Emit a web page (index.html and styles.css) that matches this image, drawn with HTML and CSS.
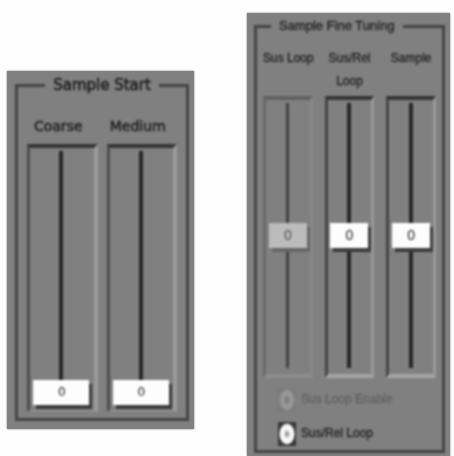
FILE: index.html
```html
<!DOCTYPE html>
<html lang="en">
<head>
<meta charset="utf-8">
<title>Sample Start</title>
<link rel="stylesheet" href="styles.css">
</head>
<body>
<main class="page">
  <section class="panel start">
    <fieldset class="frame">
      <legend>Sample Start</legend>
      <div class="sliders">
        <div class="slot">
          <label for="coarse">Coarse</label>
          <div class="well"><input id="coarse" type="range" min="0" max="100" value="0"><output class="value" for="coarse">0</output></div>
        </div>
        <div class="slot">
          <label for="medium">Medium</label>
          <div class="well"><input id="medium" type="range" min="0" max="100" value="0"><output class="value" for="medium">0</output></div>
        </div>
      </div>
    </fieldset>
  </section>
  <section class="panel fine">
    <fieldset class="frame">
      <legend>Sample Fine Tuning</legend>
      <div class="sliders">
        <div class="slot off">
          <label for="sus">Sus Loop</label>
          <div class="well"><input id="sus" type="range" min="-50" max="50" value="0" disabled><output class="value" for="sus">0</output></div>
        </div>
        <div class="slot">
          <label for="rel">Sus/Rel<br>Loop</label>
          <div class="well"><input id="rel" type="range" min="-50" max="50" value="0"><output class="value" for="rel">0</output></div>
        </div>
        <div class="slot">
          <label for="sample">Sample</label>
          <div class="well"><input id="sample" type="range" min="-50" max="50" value="0"><output class="value" for="sample">0</output></div>
        </div>
      </div>
      <div class="options">
        <label class="option off"><input type="checkbox" disabled><span>Sus Loop Enable</span></label>
        <label class="option"><input type="checkbox" checked><span>Sus/Rel Loop</span></label>
      </div>
    </fieldset>
  </section>
</main>
</body>
</html>
```
FILE: styles.css
```css
* { box-sizing: border-box; }

body {
  margin: 0;
  background: #fefefe;
  color: #202020;
  font-family: "DejaVu Sans", sans-serif;
}

.page {
  display: grid;
  grid-template-columns: minmax(0, 187fr) minmax(0, 203fr);
  gap: 53px;
  align-items: start;
  padding: 13px 4px 0 7px;
}

.panel {
  background: #808080;
  padding: 2px 5px 8px 8px;
  box-shadow: 0 0 2px #808080;
}

.start { margin-top: 58px; }

.fine {
  padding: 1px 5px 3px 7px;
  font-family: "Liberation Sans", Arial, sans-serif;
}

.frame {
  min-width: 0;
  margin: 0;
  padding: 0 9px 6px;
  border: 3px solid #444;
  filter: blur(0.9px);
}

legend {
  margin: 0 auto;
  padding: 0 8px;
  font-size: 15px;
  line-height: 24px;
}

.fine legend {
  margin-left: 8px;
  font-size: 13px;
  -webkit-text-stroke: 0.3px #202020;
}

.start legend {
  -webkit-text-stroke: 0.6px #202020;
}

.sliders {
  display: grid;
  grid-auto-flow: column;
  grid-auto-columns: minmax(0, 1fr);
  gap: 9px;
}

.fine .sliders { gap: 12px; }

.slot {
  display: flex;
  flex-direction: column;
}

.slot label {
  height: 47px;
  padding-top: 19px;
  font-size: 14px;
  line-height: 20px;
  text-align: center;
  white-space: nowrap;
  -webkit-text-stroke: 0.5px #202020;
}

.start .slot label { margin-right: 8px; }

.fine .frame { padding: 0 6px 4px; }

.fine .slot label {
  height: 58px;
  padding-top: 9px;
  font-size: 12px;
  line-height: 23px;
  -webkit-text-stroke: 0.3px #202020;
}

.well {
  position: relative;
  height: 268px;
  padding: 3px 1px 3px 0;
  border: solid;
  border-width: 4px 4px 2px 3px;
  border-color: #343434 #9b9b9b #8e8e8e #4c4c4c;
}

.fine .well {
  height: 282px;
  padding: 3px 0 6px;
  border-width: 4px 3px 4px 3px;
  border-color: #343434 #999 #a4a4a4 #444;
}

.fine .off .well { border-color: #606060 #888 #8c8c8c #686868; }

input[type="range"] {
  display: block;
  appearance: none;
  width: 100%;
  height: 100%;
  margin: 0;
  writing-mode: vertical-lr;
  direction: rtl;
  background: linear-gradient(#262626, #262626) center / 4px 100% no-repeat;
}

.off input[type="range"] {
  background-image: linear-gradient(#424242, #424242);
  background-size: 3px 100%;
}

input[type="range"]::-webkit-slider-thumb {
  appearance: none;
  width: 56px;
  height: 25px;
  border: 0;
  background: #fdfdfd;
  box-shadow: 3px 4px 0 #3c3c3c;
}

.start input[type="range"] { height: calc(100% - 2px); }

.fine input[type="range"]::-webkit-slider-thumb {
  width: 38px;
  height: 25px;
}

.fine .off input[type="range"]::-webkit-slider-thumb {
  background: #bcbcbc;
  box-shadow: 3px 4px 0 #666;
}

.value {
  position: absolute;
  inset: auto 0 5px 0;
  font-size: 12px;
  line-height: 25px;
  text-align: center;
  pointer-events: none;
}

.fine .value {
  inset: calc(50% - 14px) 0 auto 0;
  font-size: 14px;
}

.off .value { color: #4c4c4c; }

.options {
  display: grid;
  gap: 9px;
  padding: 9px 0 0 15px;
}

.option {
  display: flex;
  align-items: center;
  gap: 5px;
  font-size: 12px;
  line-height: 25px;
  white-space: nowrap;
  -webkit-text-stroke: 0.3px;
}

.option.off { color: #606060; }

.option input {
  flex: none;
  appearance: none;
  width: 18px;
  height: 24px;
  margin: 0;
  background: radial-gradient(ellipse 8px 11px at center, #999 0 15%, #f8f8f8 40% 85%, #383838 100%);
}

.option.off input {
  background: radial-gradient(ellipse 8px 11px at center, #7c7c7c 0 20%, #989898 45% 80%, #7b7b7b 100%);
}
```
